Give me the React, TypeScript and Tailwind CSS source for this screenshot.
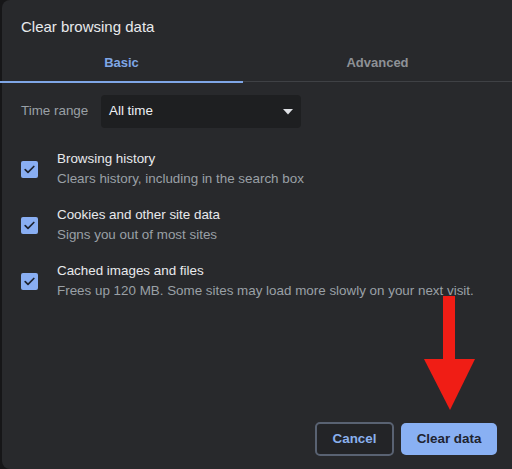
import React, { useState } from 'react';

const font = { fontFamily: '"Liberation Sans", Arial, sans-serif' };

interface DataOption {
    id: string;
    title: string;
    detail: string;
}

const options: DataOption[] = [
    { id: 'history', title: 'Browsing history', detail: 'Clears history, including in the search box' },
    { id: 'cookies', title: 'Cookies and other site data', detail: 'Signs you out of most sites' },
    { id: 'cache', title: 'Cached images and files', detail: 'Frees up 120 MB. Some sites may load more slowly on your next visit.' },
];

const CheckBox = ({ checked }: { checked: boolean }) => (
    <div className="flex h-[17px] w-[17px] shrink-0 items-center justify-center rounded-[2px] bg-[#89aef3]">
        {checked && (
            <svg width="11" height="9" viewBox="0 0 11 9" fill="none">
                <path d="M1.2 4.6 L4 7.3 L9.8 1.5" stroke="#1d2330" strokeWidth="1.7" strokeLinecap="round" strokeLinejoin="round" />
            </svg>
        )}
    </div>
);

export default function App() {
    const [tab, setTab] = useState<'basic' | 'advanced'>('basic');
    const [checked] = useState<Record<string, boolean>>({ history: true, cookies: true, cache: true });

    return (
        <div className="h-[469px] w-[512px] overflow-hidden bg-[#161618] pl-[2px]" style={font}>
            <div className="relative flex h-full w-[520px] flex-col rounded-lg bg-[#28292c] text-[#e8eaed]">
                <div className="pl-[19px] pt-[18px] text-[15px] leading-[18px]">Clear browsing data</div>

                {/* tabs */}
                <div className="mt-[8px] flex h-[38px] w-[510px] border-b border-[#3f4145]">
                    <button
                        onClick={() => setTab('basic')}
                        className={`relative -ml-[2px] flex w-[243px] items-center justify-center text-[13px] font-bold ${tab === 'basic' ? 'text-[#7fa6e6]' : 'text-[#8e9196]'}`}
                    >
                        Basic
                        {tab === 'basic' && <span className="absolute -bottom-[2px] left-0 right-0 h-[2px] bg-[#7fa6e6]" />}
                    </button>
                    <button
                        onClick={() => setTab('advanced')}
                        className={`relative flex flex-1 items-center justify-center text-[13px] font-bold ${tab === 'advanced' ? 'text-[#7fa6e6]' : 'text-[#8e9196]'}`}
                    >
                        Advanced
                    </button>
                </div>

                {/* time range */}
                <div className="mt-[13px] flex items-center pl-[19px]">
                    <span className="w-[80px] text-[13.4px] text-[#9aa0a6]">Time range</span>
                    <div className="flex h-[33px] w-[200px] items-center justify-between rounded-[4px] bg-[#1e1f21] pl-[8px] pr-[8px]">
                        <span className="text-[13.4px] text-[#eef0f3]">All time</span>
                        <svg width="10" height="6" viewBox="0 0 10 6">
                            <path d="M0 0 H10 L5 5.5 Z" fill="#dfe1e5" />
                        </svg>
                    </div>
                </div>

                {/* options */}
                <div className="mt-[21px] flex flex-col gap-[16px]">
                    {options.map((o) => (
                        <div key={o.id} className="flex items-center pl-[19px]">
                            <CheckBox checked={checked[o.id]} />
                            <div className="ml-[19px] flex flex-col">
                                <span className="text-[13.4px] leading-[20px] text-[#e8eaed]">{o.title}</span>
                                <span className="text-[13.4px] leading-[20px] text-[#9aa0a6]">{o.detail}</span>
                            </div>
                        </div>
                    ))}
                </div>

                {/* actions */}
                <div className="mt-auto mb-[13px] flex w-[510px] justify-end gap-[7px] pr-[15px]">
                    <button className="h-[34px] w-[79px] rounded-[5px] border-2 border-[#596272] bg-[#232427] text-[13.4px] font-bold text-[#8ab0ee]">
                        Cancel
                    </button>
                    <button className="h-[32px] w-[96px] self-center rounded-[5px] bg-[#89b0f3] text-[13.4px] font-bold text-[#1f2430]">
                        Clear data
                    </button>
                </div>

                {/* red pointer arrow */}
                <svg className="absolute left-[420px] top-[296px]" width="56" height="118" viewBox="0 0 56 118">
                    <rect x="21" y="0" width="12" height="66" fill="#f01d15" />
                    <path d="M2 63 H53 L28 114 Z" fill="#f01d15" />
                </svg>
            </div>
        </div>
    );
}
